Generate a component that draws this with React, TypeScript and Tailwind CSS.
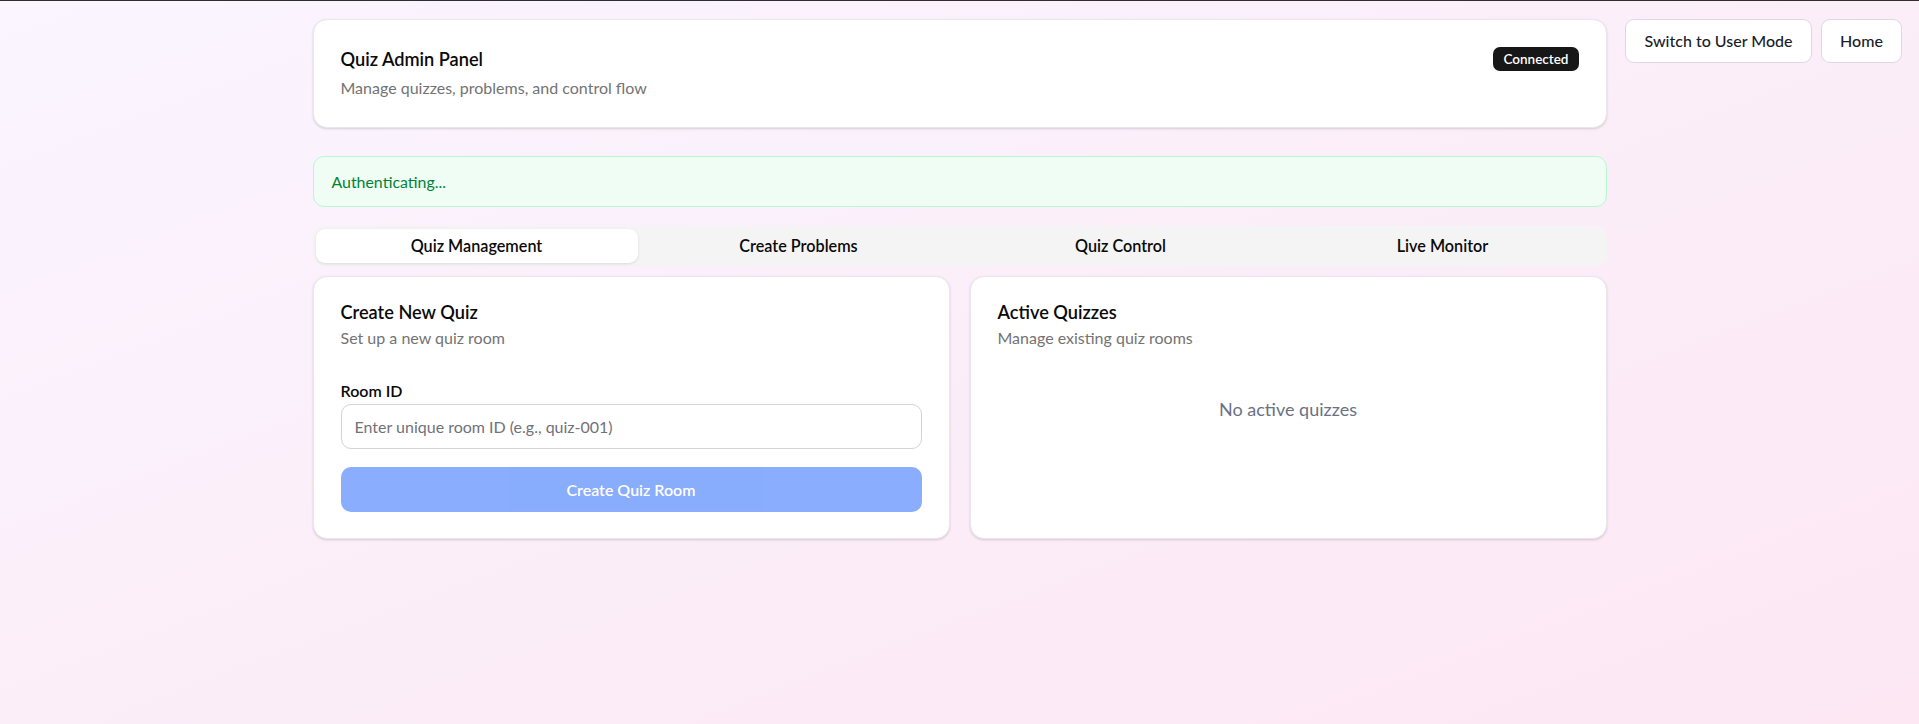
import { useState } from "react";

const tabs = ["Quiz Management", "Create Problems", "Quiz Control", "Live Monitor"];

const Card = ({ children, className = "" }: { children: React.ReactNode; className?: string }) => (
  <div className={`bg-white border border-[#ebe6ee] rounded-[14px] shadow-[0_1px_3px_rgba(0,0,0,0.1),0_1px_2px_rgba(0,0,0,0.06)] ${className}`}>
    {children}
  </div>
);

const App = () => {
  const [activeTab, setActiveTab] = useState(0);
  const [roomId, setRoomId] = useState("");

  return (
    <div className="relative min-h-screen border-t border-[#2e2e2e] bg-gradient-to-br from-purple-50 to-pink-100 font-['Lato','Segoe_UI',sans-serif] text-[#0a0a0a]">
      <div className="absolute top-[18px] right-[17px] flex gap-[9px]">
        <button className="h-[44px] w-[187px] rounded-[9px] border border-[#ddd8e2] bg-white text-[16px] font-medium text-[#1c1c28]">
          Switch to User Mode
        </button>
        <button className="h-[44px] w-[81px] rounded-[9px] border border-[#ddd8e2] bg-white text-[16px] font-medium text-[#1c1c28]">
          Home
        </button>
      </div>

      <div className="mx-auto w-[1294px] pt-[18px]">
        {/* header */}
        <Card className="px-[27px] pt-[28px] pb-[28px]">
          <div className="flex h-[22px] items-center justify-between">
            <h1 className="text-[18.2px] leading-[22px] font-semibold">Quiz Admin Panel</h1>
            <span className="flex h-[24px] shrink-0 items-center rounded-[7px] bg-[#171717] px-[10px] text-[13.5px] font-semibold text-white">
              Connected
            </span>
          </div>
          <p className="mt-[7px] text-[16px] leading-[22px] text-[#737373]">
            Manage quizzes, problems, and control flow
          </p>
        </Card>

        {/* status */}
        <div className="mt-[28px] flex h-[51px] items-center rounded-[11px] border border-[#b9f8cf] bg-[#f0fdf4] px-[18px] text-[15.9px] text-[#008236]">
          Authenticating...
        </div>

        {/* tabs */}
        <div className="mt-[19px] grid h-[40px] grid-cols-4 rounded-[12px] bg-[#f4f4f4] p-[3px]">
          {tabs.map((tab, i) => (
            <button
              key={tab}
              onClick={() => setActiveTab(i)}
              className={`rounded-[9px] text-[16.2px] font-semibold text-[#0a0a0a] ${
                activeTab === i ? "bg-white shadow-[0_1px_3px_rgba(0,0,0,0.1)]" : ""
              }`}
            >
              {tab}
            </button>
          ))}
        </div>

        <div className="mt-[10px] grid grid-cols-2 gap-[20px]">
          <Card className="px-[27px] pt-[24px] pb-[26px]">
            <h2 className="text-[18.2px] leading-[22px] font-semibold">Create New Quiz</h2>
            <p className="mt-[4px] text-[16px] leading-[22px] text-[#737373]">Set up a new quiz room</p>

            <label className="mt-[31px] block text-[16px] leading-[22px] font-semibold">Room ID</label>
            <input
              value={roomId}
              onChange={(e) => setRoomId(e.target.value)}
              placeholder="Enter unique room ID (e.g., quiz-001)"
              className="mt-[2px] h-[45px] w-full rounded-[10px] border border-[#d4d4d8] bg-white px-[13px] text-[16px] outline-none placeholder:text-[#71717a]"
            />
            <button
              disabled={!roomId}
              className="mt-[18px] h-[45px] w-full rounded-[10px] bg-[#155dfc] text-[16px] font-semibold text-white disabled:opacity-50"
            >
              Create Quiz Room
            </button>
          </Card>

          <Card className="px-[27px] pt-[24px] pb-[26px]">
            <h2 className="text-[18.2px] leading-[22px] font-semibold">Active Quizzes</h2>
            <p className="mt-[4px] text-[16px] leading-[22px] text-[#737373]">Manage existing quiz rooms</p>
            <p className="mt-[47px] text-center text-[18px] leading-[26px] text-[#6a7282]">No active quizzes</p>
          </Card>
        </div>
      </div>
    </div>
  );
};

export default App;
